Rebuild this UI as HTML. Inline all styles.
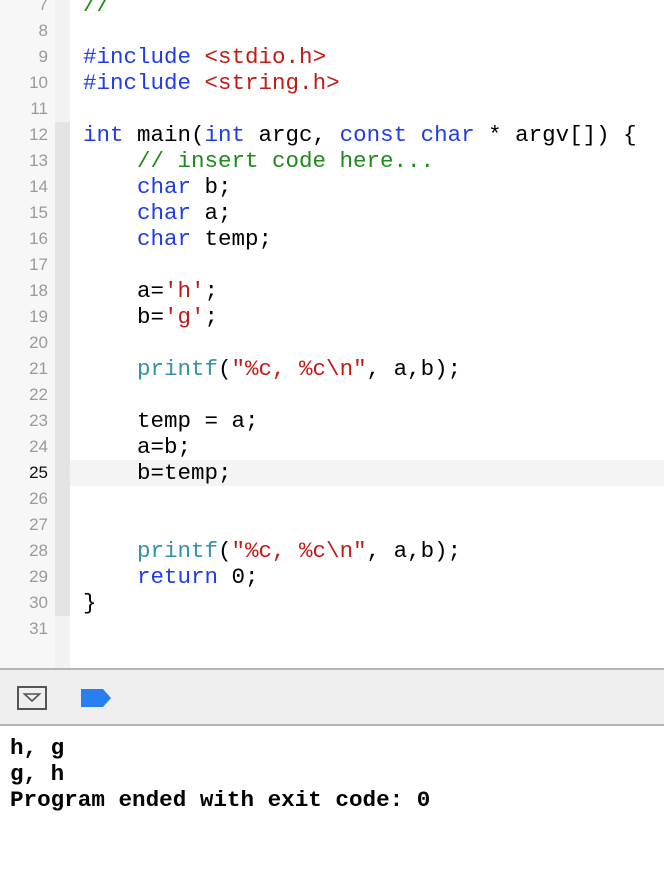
<!DOCTYPE html>
<html><head><style>
body{margin:0;width:664px;height:892px;background:#fff;position:relative;overflow:hidden;font-family:"Liberation Mono",monospace}
#gut{position:absolute;left:0;top:0;width:55px;height:668px;background:#f7f7f7}
#strip{position:absolute;left:55px;top:0;width:15px;height:668px;background:#f2f2f2}
#strip2{position:absolute;left:55px;top:122px;width:15px;height:494px;background:#e4e4e4}
#hl{position:absolute;left:70px;top:460px;width:594px;height:26px;background:#f4f4f4}
.n{position:absolute;left:0;width:48px;text-align:right;font-family:"Liberation Sans",sans-serif;font-size:17px;color:#9a9a9a;height:26px;line-height:26px}
.c{position:absolute;left:83px;font-size:22.5px;height:26px;line-height:26px;white-space:pre;color:#000}
.k{color:#1f3ce8}.s{color:#c41a16}.g{color:#1f8a1a}.p{color:#3590a8}
#bar{position:absolute;left:0;top:668px;width:664px;height:58px;background:#efefef;border-top:2px solid #b5b5b5;border-bottom:2px solid #b5b5b5;box-sizing:border-box}
#out{position:absolute;left:10px;top:735px;font-size:22.6px;font-weight:bold;line-height:26px;white-space:pre}
</style></head><body>
<div id="gut"></div><div id="strip"></div><div id="strip2"></div><div id="hl"></div>
<div class="n" style="top:-8px">7</div>
<div class="n" style="top:18px">8</div>
<div class="n" style="top:44px">9</div>
<div class="n" style="top:70px">10</div>
<div class="n" style="top:96px">11</div>
<div class="n" style="top:122px">12</div>
<div class="n" style="top:148px">13</div>
<div class="n" style="top:174px">14</div>
<div class="n" style="top:200px">15</div>
<div class="n" style="top:226px">16</div>
<div class="n" style="top:252px">17</div>
<div class="n" style="top:278px">18</div>
<div class="n" style="top:304px">19</div>
<div class="n" style="top:330px">20</div>
<div class="n" style="top:356px">21</div>
<div class="n" style="top:382px">22</div>
<div class="n" style="top:408px">23</div>
<div class="n" style="top:434px">24</div>
<div class="n" style="top:460px;color:#111">25</div>
<div class="n" style="top:486px">26</div>
<div class="n" style="top:512px">27</div>
<div class="n" style="top:538px">28</div>
<div class="n" style="top:564px">29</div>
<div class="n" style="top:590px">30</div>
<div class="n" style="top:616px">31</div>
<div class="c g" style="top:-8px">//</div>
<div class="c" style="top:44px"><span class="k">#include</span> <span class="s">&lt;stdio.h&gt;</span></div>
<div class="c" style="top:70px"><span class="k">#include</span> <span class="s">&lt;string.h&gt;</span></div>
<div class="c" style="top:122px"><span class="k">int</span> main(<span class="k">int</span> argc, <span class="k">const</span> <span class="k">char</span> * argv[]) {</div>
<div class="c g" style="top:148px">    // insert code here...</div>
<div class="c" style="top:174px">    <span class="k">char</span> b;</div>
<div class="c" style="top:200px">    <span class="k">char</span> a;</div>
<div class="c" style="top:226px">    <span class="k">char</span> temp;</div>
<div class="c" style="top:278px">    a=<span class="s">'h'</span>;</div>
<div class="c" style="top:304px">    b=<span class="s">'g'</span>;</div>
<div class="c" style="top:356px">    <span class="p">printf</span>(<span class="s">"%c, %c\n"</span>, a,b);</div>
<div class="c" style="top:408px">    temp = a;</div>
<div class="c" style="top:434px">    a=b;</div>
<div class="c" style="top:460px">    b=temp;</div>
<div class="c" style="top:538px">    <span class="p">printf</span>(<span class="s">"%c, %c\n"</span>, a,b);</div>
<div class="c" style="top:564px">    <span class="k">return</span> 0;</div>
<div class="c" style="top:590px">}</div>
<div id="bar"></div>
<svg style="position:absolute;left:0;top:668px" width="140" height="58">
<rect x="18" y="19" width="28" height="22" fill="none" stroke="#555" stroke-width="2"/>
<path d="M24.5 26 L39.5 26 L32 33 Z" fill="none" stroke="#555" stroke-width="1.6"/>
<path d="M81 21 H103 L111 30 L103 39 H81 Z" fill="#2a7ff0"/>
</svg>
<div id="out">h, g
g, h
Program ended with exit code: 0</div>
</body></html>
